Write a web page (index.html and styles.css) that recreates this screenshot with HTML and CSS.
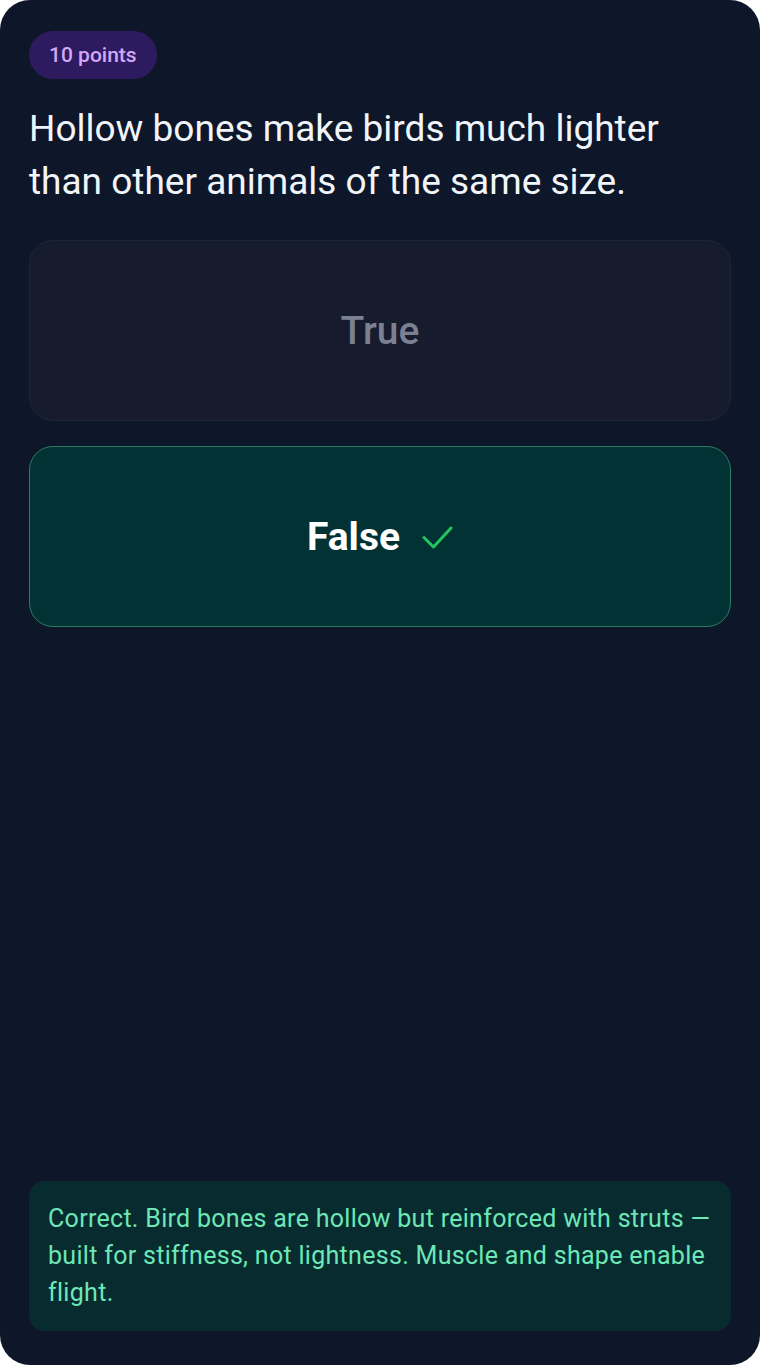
FILE: index.html
```html
<!DOCTYPE html>
<html lang="en">

<head>
  <meta charset="UTF-8" />
  <meta name="viewport" content="width=device-width, initial-scale=1.0" />
  <title>Quiz Question</title>
  <link rel="stylesheet" href="styles.css">
</head>

<body>
  <div class="quiz-card">
    <span class="points-badge">10 points</span>

    <h1 class="question">Hollow bones make birds much lighter than other animals of the same size.</h1>

    <div class="answers">
      <button class="answer answer-dim">True</button>
      <button class="answer answer-correct">
        False
        <svg class="check-icon" viewBox="0 0 31 24" width="31" height="24" fill="none" stroke="currentColor"
          stroke-width="3" stroke-linecap="round" stroke-linejoin="round">
          <path d="M2 12.5l9.5 9.5L29 3" />
        </svg>
      </button>
    </div>

    <div class="feedback">
      Correct. Bird bones are hollow but reinforced with struts — built for stiffness, not lightness. Muscle and shape enable flight.
    </div>
  </div>
</body>

</html>
```

FILE: styles.css
```css
:root {
  --page-bg: #0d1729;
  --badge-bg: #2e1a5e;
  --badge-text: #d1a8f7;
  --text-color: #f1f5f9;
  --dim-bg: #161c2e;
  --dim-border: #1d2537;
  --dim-text: #7b8191;
  --correct-bg: #033234;
  --correct-border: #2b7d5e;
  --check-color: #22c55e;
  --feedback-bg: #072b2f;
  --feedback-text: #6ee7b7;
}

* {
  box-sizing: border-box;
}

body {
  margin: 0;
  background-color: #ffffff;
  font-family: Roboto, "Noto Sans", sans-serif;
}

.quiz-card {
  display: flex;
  flex-direction: column;
  align-items: flex-start;
  min-height: 1365px;
  padding: 31px 29px 34px;
  background-color: var(--page-bg);
  border-radius: 30px;
  color: var(--text-color);
}

.points-badge {
  padding: 11px 20px;
  font-size: 21px;
  font-weight: 500;
  line-height: 26px;
  color: var(--badge-text);
  background-color: var(--badge-bg);
  border-radius: 24px;
}

.question {
  margin: 23px 0 0;
  font-size: 37px;
  font-weight: 400;
  line-height: 53px;
  color: var(--text-color);
}

.answers {
  display: flex;
  flex-direction: column;
  gap: 25px;
  width: 100%;
  margin-top: 32px;
}

.answer {
  display: flex;
  align-items: center;
  justify-content: center;
  gap: 22px;
  width: 100%;
  height: 181px;
  font-family: inherit;
  font-size: 39px;
  border-radius: 24px;
  cursor: pointer;
}

.answer-dim {
  font-weight: 500;
  color: var(--dim-text);
  background-color: var(--dim-bg);
  border: 1px solid var(--dim-border);
}

.answer-correct {
  font-weight: 700;
  color: #ffffff;
  background-color: var(--correct-bg);
  border: 1px solid var(--correct-border);
}

.check-icon {
  color: var(--check-color);
}

.feedback {
  width: 100%;
  margin-top: auto;
  padding: 19px 14px 20px 19px;
  font-size: 25px;
  letter-spacing: 0.3px;
  line-height: 37px;
  color: var(--feedback-text);
  background-color: var(--feedback-bg);
  border-radius: 16px;
}
```
